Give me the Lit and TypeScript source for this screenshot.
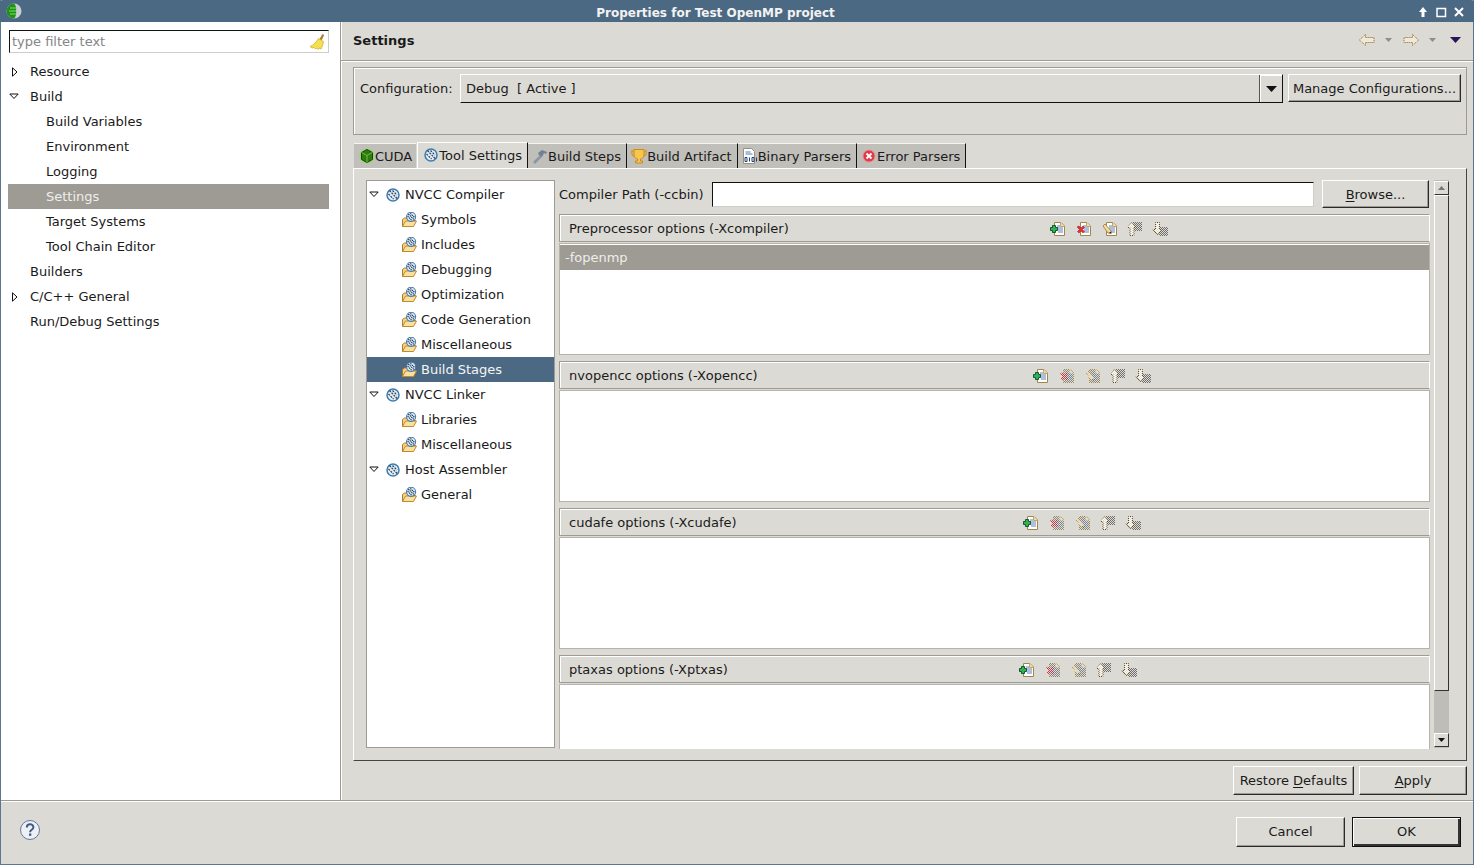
import { LitElement, html, css, svg } from "lit";
import { customElement } from "lit/decorators.js";

const ico = (w: number, h: number, body: unknown) =>
  html`<svg class="ico" width=${w} height=${h} viewBox="0 0 ${w} ${h}">${body}</svg>`;

const pageBody = (fill: string) => svg`<path d="M4.500 1.500h6.500l3.500 3.500v9.500h-10z" fill=${fill} stroke="#a08648"/><path d="M10.500 1.500v4h4" fill="#f0dca8" stroke="#c2a468"/><path d="M7 7h6M8 9h5M8 11h5M7 5h3" stroke="#5f7fb8"/>`;
const addIcon = ico(16, 16, svg`${pageBody("#fff")}<path d="M2.500 4.500h3v2h2v3h-2v2h-3v-2h-2v-3h2z" fill="#35b050" stroke="#0d5a33"/>`);
const xPath = "M1 6l2-1 2 2 2-2 1.500 1.500-2 2 2 2L7 12l-2-2-2 2-1.500-1.500 2-2z";
const delBody = (fill: string) => svg`${pageBody(fill)}<path d=${xPath} fill="#d8323c" stroke="#b8202c" stroke-width=".6"/>`;
const editBody = (fill: string) => svg`${pageBody(fill)}<path d="M1 5l2-2 6.500 7.500-1 2-2.500-.5z" fill="#f2dc9c" stroke="#a98c55"/><path d="M7 11.500l2-1 .5 2.500z" fill="#223"/>`;
const upBody = svg`<rect x="7" y="1" width="9" height="9" fill="#6f6f6f"/><path d="M6 1.500l4.500 5h-2.500v8h-4v-8h-2.500z" fill="#fff" stroke="#6d4f14"/>`;
const downBody = svg`<rect x="7" y="6" width="9" height="9" fill="#6f6f6f"/><path d="M3.500 1.500h4v7h2.500l-4.500 5.500-4.500-5.500h2.500z" fill="#fff" stroke="#6d4f14"/>`;
const dis = (b: unknown) => ico(16, 16, svg`<g mask="url(#ck)">${b}</g>`);
const delIcon = ico(16, 16, delBody("#fff"));
const editIcon = ico(16, 16, editBody("#fff"));
const delOff = dis(delBody("#888"));
const editOff = dis(editBody("#888"));
const upOff = dis(upBody);
const downOff = dis(downBody);

const gear = ico(16, 16, svg`<circle cx="8" cy="8" r="6" fill="#e4edf5" stroke="#3f7cae" stroke-width="1.500"/><path d="M4.500 3.500l8 8.500M7.500 3.500l4.500 4.500M3.500 7l5 5" stroke="#2e4664" stroke-width="1.300" stroke-dasharray="2 1"/>`);
const folderGear = ico(16, 16, svg`<path d="M1.500 14.500v-7l2-1.500h3l1 1.500h1v1h6l-3 6z" fill="#f5d48a" stroke="#b07a22"/><path d="M1.500 14.500l3-5.500h11l-3 5.500z" fill="#fbdf9c" stroke="#c08a30"/><g transform="translate(4.500 -.8) scale(.7)"><circle cx="8" cy="8" r="6.500" fill="#e4edf5" stroke="#3f7cae" stroke-width="1.500"/><path d="M4 4l8 8M7 3l6 6M3 7l6 6" stroke="#1e3558" stroke-width="1.600" stroke-dasharray="2 1"/></g>`);

const arrowPath = "M.5 6l6-5.500v3h8.500v5h-8.500v3z";
const navArrow = (flip: boolean) => ico(16, 12, svg`<g transform=${flip ? "translate(16 0) scale(-1 1)" : ""}><path d=${arrowPath} fill="#efe9d8"/><path d=${arrowPath} fill="none" stroke="#8a6420" stroke-dasharray="1 1"/></g>`);
const smallDrop = ico(7, 4, svg`<path d="M0 0h7l-3.500 4z" fill="#8f8d88"/>`);

const cube = ico(16, 16, svg`<circle cx="8" cy="8" r="7.500" fill="#7fe040" opacity=".55"/><path d="M8 1.500l5.500 3v7l-5.500 3-5.500-3v-7z" fill="#2f7a12" stroke="#164a08"/><path d="M2.500 4.500l5.500 3 5.500-3M8 7.500v7" stroke="#6fc03a" fill="none"/>`);
const hammer = ico(16, 16, svg`<path d="M1 14l7-7 2 2-7 7z" fill="#8a97a8"/><path d="M6 5l4-3 5 2-1 2-2-1-2 4-3-2z" fill="#6f8196"/>`);
const trophy = ico(16, 16, svg`<path d="M3 1.500h10v5c0 3-2 4-3.500 4.500v2h2v2h-7v-2h2v-2C5 10.500 3 9.500 3 6.500z" fill="#f7c64a" stroke="#c98c1a"/><path d="M3 3H.8v2c0 2 1.500 3 3 3M13 3h2.200v2c0 2-1.500 3-3 3" fill="none" stroke="#d69a28" stroke-width="1.300"/>`);
const binDoc = html`<svg class="ico" width="16" height="16" viewBox="0 0 16 16"><path d="M1.500.5h8l3 3v12h-11z" fill="#fff" stroke="#9a9078"/><path d="M3.500 4h5M3.500 6h7" stroke="#4a78b8"/><path d="M3 9.500h2v4H3zM10 9.500h2v4h-2z" fill="none" stroke="#1f3f78"/><path d="M7.500 9.500v4M14.500 9.500v4" stroke="#1f3f78"/></svg>`;
const errIcon = ico(16, 16, svg`<circle cx="8" cy="8" r="6" fill="#e03a48" stroke="#f08a90"/><path d="M5.500 5.500l5 5M10.500 5.500l-5 5" stroke="#fff" stroke-width="2"/>`);
const broom = ico(16, 17, svg`<path d="M10.500 6l3-5 1.700 1-2.700 5.500z" fill="#b07a30"/><path d="M9.500 5.500l5 3c-.5 3-1.500 6-2.500 7.500l-2-1-1 1.500-1.500-1.500-1 1-1.500-1.500-2 .5-2-1.500c3-1 6-4 8.500-8z" fill="#f4e04e" stroke="#c9a92c" stroke-width=".7"/>`);
const helpIcon = html`<svg class="ico" width="20" height="20" viewBox="0 0 20 20"><circle cx="10" cy="10" r="9.500" fill="#eef0f4" stroke="#5d7ba0"/><path d="M6.800 7.500c0-4.300 6.600-4.300 6.600-.3 0 2.700-3.300 2.500-3.300 5" fill="none" stroke="#3f5c85" stroke-width="2"/><rect x="9" y="13.500" width="2.300" height="2.300" fill="#3f5c85"/></svg>`;
const appIcon = html`<svg class="ico" width="16" height="16" viewBox="0 0 16 16"><circle cx="8" cy="8" r="7.500" fill="#c9d0d3"/><path d="M8 .5a7.500 7.500 0 0 0 0 15 6 7.500 0 0 0 2-7.500 6 7.500 0 0 0-2-7.500z" fill="#1f8f1f"/><path d="M4 5h6M3 8h8M4 11h6" stroke="#7fe060"/></svg>`;

interface Node { t: string; d: number; open?: boolean; closed?: boolean; sel?: boolean; }
const leftTree: Node[] = [
  { t: "Resource", d: 0, closed: true },
  { t: "Build", d: 0, open: true },
  { t: "Build Variables", d: 1 },
  { t: "Environment", d: 1 },
  { t: "Logging", d: 1 },
  { t: "Settings", d: 1, sel: true },
  { t: "Target Systems", d: 1 },
  { t: "Tool Chain Editor", d: 1 },
  { t: "Builders", d: 0 },
  { t: "C/C++ General", d: 0, closed: true },
  { t: "Run/Debug Settings", d: 0 },
];
const toolTree: Node[] = [
  { t: "NVCC Compiler", d: 0, open: true },
  { t: "Symbols", d: 1 }, { t: "Includes", d: 1 }, { t: "Debugging", d: 1 },
  { t: "Optimization", d: 1 }, { t: "Code Generation", d: 1 }, { t: "Miscellaneous", d: 1 },
  { t: "Build Stages", d: 1, sel: true },
  { t: "NVCC Linker", d: 0, open: true },
  { t: "Libraries", d: 1 }, { t: "Miscellaneous", d: 1 },
  { t: "Host Assembler", d: 0, open: true },
  { t: "General", d: 1 },
];
const sections = [
  { t: "Preprocessor options (-Xcompiler)", x: 490, on: true, items: ["-fopenmp"] },
  { t: "nvopencc options (-Xopencc)", x: 473, on: false, items: [] as string[] },
  { t: "cudafe options (-Xcudafe)", x: 463, on: false, items: [] as string[] },
  { t: "ptaxas options (-Xptxas)", x: 459, on: false, items: [] as string[] },
];
const tabs = [
  { t: "CUDA", i: cube },
  { t: "Tool Settings", i: gear, active: true },
  { t: "Build Steps", i: hammer },
  { t: "Build Artifact", i: trophy },
  { t: "Binary Parsers", i: binDoc },
  { t: "Error Parsers", i: errIcon },
];

const arrowClosed = html`<svg class="ico" width="7" height="10" viewBox="0 0 7 10"><path d="M1.500 .8l4.500 4.200-4.500 4.200z" fill="#fff" stroke="#111"/></svg>`;
const arrowOpen = html`<svg class="ico" width="10" height="7" viewBox="0 0 10 7"><path d="M.8 1h8.400l-4.200 4.500z" fill="#fff" stroke="#111"/></svg>`;

@customElement("app-root")
export class AppRoot extends LitElement {
  static styles = css`
    :host { display: block; width: 1474px; height: 865px; overflow: hidden; font: 13px "DejaVu Sans", sans-serif; color: #1a1a1a; background: #dcdad5; }
    .ico { display: block; flex: none; }
    .defs { display: block; width: 0; height: 0; }
    .win { height: 865px; display: flex; flex-direction: column; box-sizing: border-box; border: solid #5a7690; border-width: 0 1px 1px 1px; }
    .title { height: 22px; margin: 0 -1px; background: #4b6983; flex: none; display: flex; align-items: center; color: #f2f2f2; font-weight: bold; font-size: 12px; padding: 0 9px 0 6px; box-sizing: border-box; border-radius: 3px 3px 0 0; }
    .title .text { flex: 1; text-align: center; padding: 4px 8px 0 0; }
    .wbtns { display: flex; gap: 6px; align-items: center; padding-top: 1px; }
    .main { height: 778px; display: flex; flex: none; }
    .left { width: 339px; flex: none; background: #fff; padding: 8px 11px 0 7px; box-sizing: border-box; }
    .filter { height: 23px; margin: 0 0 6px 1px; box-sizing: border-box; border: 1px solid; border-color: #111 #cfcdc8 #cfcdc8 #111; display: flex; align-items: center; padding: 0 3px 0 2px; color: #858585; justify-content: space-between; }
    .row { height: 25px; display: flex; align-items: center; white-space: nowrap; }
    .sel-grey { background: #9d9b94; color: #eeeeea; }
    .sel-blue { background: #4b6983; color: #f5f5f5; }
    .arrow { width: 10px; display: flex; justify-content: center; flex: none; }
    .lrow { padding-left: 1px; }
    .lrow .arrow { margin-right: 11px; }
    .lrow .spacer { width: 21px; flex: none; }
    .lrow .indent { width: 16px; flex: none; }
    .right { flex: 1; border-left: 1px solid #9d9b94; box-shadow: inset 1px 0 0 #fff; padding: 0 6px 0 12px; display: flex; flex-direction: column; min-width: 0; }
    .hdr { height: 39px; margin: 0 -6px 0 -12px; padding: 0 6px 2px 12px; box-sizing: border-box; display: flex; align-items: center; font-weight: bold; border-bottom: 1px solid #9d9b94; box-shadow: 0 1px 0 #fff; flex: none; }
    .hdr .name { flex: 1; }
    .nav { display: flex; align-items: center; margin-right: 6px; }
    .nav .d { margin: 0 11px 0 10px; }
    .nav .menu { margin-left: 3px; }
    .cfg { height: 68px; margin-top: 6px; box-sizing: border-box; flex: none; border: 1px solid #9d9b94; box-shadow: inset 1px 1px 0 #fff; padding: 6px 5px 0 6px; display: flex; align-items: flex-start; }
    .cfg .lbl { width: 100px; height: 29px; display: flex; align-items: center; flex: none; }
    .combo { flex: 1; height: 29px; box-sizing: border-box; border: 1px solid; border-color: #fff #111 #111 #fff; display: flex; align-items: center; padding-left: 5px; justify-content: space-between; white-space: pre; }
    .combo .drop { width: 22px; height: 27px; border-left: 1px solid #555; box-shadow: inset 1px 1px 0 #fff; display: flex; align-items: center; justify-content: center; }
    .btn { box-sizing: border-box; display: flex; align-items: center; justify-content: center; flex: none; border: 1px solid; border-color: #fff #2a2a2a #2a2a2a #fff; box-shadow: inset -1px -1px 0 #9d9b94; white-space: nowrap; }
    .manage { width: 173px; height: 28px; margin-left: 5px; }
    .tabs { display: flex; margin-top: 7px; height: 26px; flex: none; align-items: flex-end; }
    .tab { height: 25px; box-sizing: border-box; background: #c1bfb9; border-top: 1px solid #f4f4f2; border-right: 1px solid #111; padding: 0 5px 0 4px; display: flex; align-items: center; white-space: nowrap; }
    .tab:first-child { border-right: none; margin: 0 1px; padding: 0 4px 0 5px; }
    .tab.on { background: #dcdad5; height: 27px; margin-bottom: -1px; border-top: 1px solid #fff; border-left: 1px solid #fff; padding: 0 5px 2px 5px; }
    .folder { height: 593px; flex: none; box-sizing: border-box; border: 1px solid; border-color: #fff #444 #444 #fff; padding: 11px 17px 11px 12px; display: flex; }
    .tree { width: 189px; height: 568px; flex: none; box-sizing: border-box; background: #fff; border: 1px solid #9d9b94; padding-top: 1px; }
    .trow .arrow { margin: 0 0 0 1px; }
    .trow { padding-left: 1px; }
    .trow .gear0 { margin: 0 4px 0 6px; }
    .trow .gear1 { margin: 0 4px 0 33px; }
    .content { flex: 1; min-width: 0; margin-left: 4px; height: 569px; display: flex; flex-direction: column; overflow: hidden; }
    .pathrow { display: flex; height: 28px; flex: none; align-items: center; margin-bottom: 6px; padding-right: 1px; }
    .pathrow .lbl { width: 153px; flex: none; }
    .field { width: 602px; height: 25px; box-sizing: border-box; background: #fff; border: 1px solid; border-color: #111 #cfcdc8 #cfcdc8 #111; flex: none; }
    .browse { width: 107px; height: 28px; margin-left: 8px; }
    .sec { flex: none; margin: 0 0 6px 0; width: 871px; }
    .sechead { height: 28px; box-sizing: border-box; border: 1px solid #9d9b94; border-right-color: #fff; box-shadow: inset 1px 1px 0 #fff; display: flex; align-items: center; padding-left: 9px; position: relative; white-space: nowrap; }
    .tools { display: flex; gap: 10px; position: absolute; top: 6px; }
    .tools .mv { margin-left: -2px; }
    .list { height: 112px; box-sizing: border-box; background: #fff; border: 1px solid #b5b3ac; padding-top: 1px; margin-top: 1px; }
    .item { height: 25px; background: #9d9b94; color: #eeeeea; display: flex; align-items: center; padding-left: 5px; }
    .scroll { width: 15px; height: 568px; flex: none; margin-left: 4px; background: #bfbdb7; display: flex; flex-direction: column; padding: 1px 0; box-sizing: border-box; }
    .sbtn { height: 14px; background: #dcdad5; flex: none; box-sizing: border-box; border: 1px solid; border-color: #fff #333 #333 #fff; display: flex; align-items: center; justify-content: center; }
    .thumb { height: 496px; background: #dcdad5; flex: none; box-sizing: border-box; border: 1px solid; border-color: #fff #333 #333 #fff; }
    .grow { flex: 1; }
    .actions { display: flex; justify-content: flex-end; gap: 5px; margin-top: 5px; flex: none; }
    .restore { width: 121px; height: 29px; }
    .apply { width: 108px; height: 29px; }
    .foot { flex: 1; display: flex; align-items: center; border-top: 1px solid #9d9b94; box-shadow: inset 0 1px 0 #fff; padding: 0 12px 6px 19px; }
    .cancel { width: 109px; height: 30px; margin: 4px 7px 0 0; }
    .ok { width: 109px; height: 30px; margin-top: 4px; border-color: #111; box-shadow: inset 1px 1px 0 #fff, inset -2px -2px 0 #333; }
    u { text-decoration: underline; text-underline-offset: 2px; }
  `;

  leftRow(n: Node) {
    return html`<div class="row lrow ${n.sel ? "sel-grey" : ""}">
      ${n.d === 1 ? html`<span class="spacer"></span><span class="indent"></span>` : n.open || n.closed
        ? html`<span class="arrow">${n.open ? arrowOpen : arrowClosed}</span>`
        : html`<span class="spacer"></span>`}
      ${n.t}
    </div>`;
  }

  treeRow(n: Node) {
    return html`<div class="row trow ${n.sel ? "sel-blue" : ""}">
      ${n.d === 0
        ? html`<span class="arrow">${arrowOpen}</span><span class="gear0">${gear}</span>`
        : html`<span class="gear1">${folderGear}</span>`}
      ${n.t}
    </div>`;
  }

  section(s: (typeof sections)[number]) {
    return html`<div class="sec">
      <div class="sechead">${s.t}
        <div class="tools" style="left:${s.x}px">
          ${addIcon}${s.on ? delIcon : delOff}${s.on ? editIcon : editOff}<span class="mv">${upOff}</span>${downOff}
        </div>
      </div>
      <div class="list">${s.items.map((i) => html`<div class="item">${i}</div>`)}</div>
    </div>`;
  }

  render() {
    return html`
      <svg class="defs" width="0" height="0"><defs>
        <pattern id="p1" width="2" height="2" patternUnits="userSpaceOnUse"><rect width="1" height="1" fill="#fff"/><rect x="1" y="1" width="1" height="1" fill="#fff"/></pattern>
        <mask id="ck" maskUnits="userSpaceOnUse" x="0" y="0" width="16" height="16"><rect width="16" height="16" fill="url(#p1)"/></mask>
      </defs></svg>
      <div class="win">
        <div class="title">
          ${appIcon}
          <div class="text">Properties for Test OpenMP project</div>
          <div class="wbtns">
            <svg class="ico" width="12" height="12" viewBox="0 0 12 12"><path d="M6 1l4 5H7.500v5h-3V6H2z" fill="#fff"/></svg>
            <svg class="ico" width="12" height="12" viewBox="0 0 12 12"><path d="M2 2.500h8.500v8H2z" fill="none" stroke="#fff" stroke-width="1.500"/></svg>
            <svg class="ico" width="12" height="12" viewBox="0 0 12 12"><path d="M2 2l8 8M10 2l-8 8" stroke="#fff" stroke-width="2"/></svg>
          </div>
        </div>
        <div class="main">
          <div class="left">
            <div class="filter"><span>type filter text</span>${broom}</div>
            ${leftTree.map((n) => this.leftRow(n))}
          </div>
          <div class="right">
            <div class="hdr"><span class="name">Settings</span>
              <div class="nav">${navArrow(false)}<span class="d">${smallDrop}</span>${navArrow(true)}<span class="d">${smallDrop}</span>
                <svg class="ico menu" width="11" height="6" viewBox="0 0 11 6"><path d="M0 0h11l-5.500 6z" fill="#2a1458"/></svg></div>
            </div>
            <div class="cfg">
              <span class="lbl">Configuration:</span>
              <div class="combo"><span>Debug  [ Active ]</span><span class="drop"><svg class="ico" width="11" height="6" viewBox="0 0 11 6"><path d="M0 0h11l-5.500 6z" fill="#111"/></svg></span></div>
              <div class="btn manage">Manage Configurations...</div>
            </div>
            <div class="tabs">
              ${tabs.map((t) => html`<div class="tab ${t.active ? "on" : ""}">${t.i}<span>${t.t}</span></div>`)}
            </div>
            <div class="folder">
              <div class="tree">${toolTree.map((n) => this.treeRow(n))}</div>
              <div class="content">
                <div class="pathrow"><span class="lbl">Compiler Path (-ccbin)</span><div class="field"></div><div class="btn browse"><span><u>B</u>rowse...</span></div></div>
                ${sections.map((s) => this.section(s))}
              </div>
              <div class="scroll">
                <div class="sbtn"><svg class="ico" width="7" height="4" viewBox="0 0 7 4"><path d="M3.500 0l3.500 4H0z" fill="#777"/></svg></div>
                <div class="thumb"></div>
                <div class="grow"></div>
                <div class="sbtn"><svg class="ico" width="7" height="4" viewBox="0 0 7 4"><path d="M0 0h7L3.500 4z" fill="#111"/></svg></div>
              </div>
            </div>
            <div class="actions">
              <div class="btn restore"><span>Restore <u>D</u>efaults</span></div>
              <div class="btn apply"><span><u>A</u>pply</span></div>
            </div>
          </div>
        </div>
        <div class="foot">
          ${helpIcon}
          <span class="grow"></span>
          <div class="btn cancel">Cancel</div>
          <div class="btn ok">OK</div>
        </div>
      </div>
    `;
  }
}
